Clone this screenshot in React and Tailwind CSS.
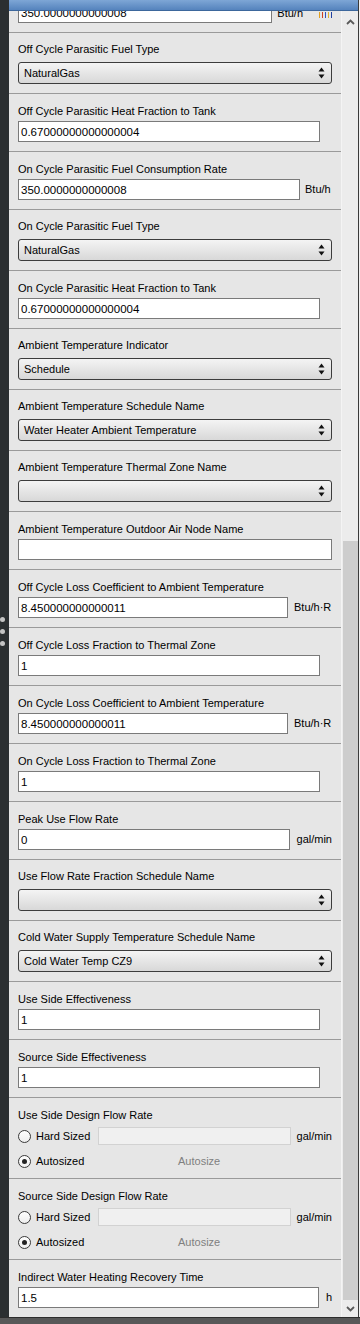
import React from "react";

const sections = [
  { kind: "select", label: "Off Cycle Parasitic Fuel Type", value: "NaturalGas" },
  { kind: "input", label: "Off Cycle Parasitic Heat Fraction to Tank", value: "0.67000000000000004", w: "w-[302px]" },
  { kind: "input", label: "On Cycle Parasitic Fuel Consumption Rate", value: "350.0000000000008", w: "w-[282px]", unit: "Btu/h", gap: "ml-[5px]" },
  { kind: "select", label: "On Cycle Parasitic Fuel Type", value: "NaturalGas" },
  { kind: "input", label: "On Cycle Parasitic Heat Fraction to Tank", value: "0.67000000000000004", w: "w-[302px]" },
  { kind: "select", label: "Ambient Temperature Indicator", value: "Schedule" },
  { kind: "select", label: "Ambient Temperature Schedule Name", value: "Water Heater Ambient Temperature" },
  { kind: "select", label: "Ambient Temperature Thermal Zone Name", value: "" },
  { kind: "input", label: "Ambient Temperature Outdoor Air Node Name", value: "", w: "w-[314px]" },
  { kind: "input", label: "Off Cycle Loss Coefficient to Ambient Temperature", value: "8.450000000000011", w: "w-[270px]", unit: "Btu/h·R", gap: "ml-[6px]" },
  { kind: "input", label: "Off Cycle Loss Fraction to Thermal Zone", value: "1", w: "w-[302px]" },
  { kind: "input", label: "On Cycle Loss Coefficient to Ambient Temperature", value: "8.450000000000011", w: "w-[270px]", unit: "Btu/h·R", gap: "ml-[6px]" },
  { kind: "input", label: "On Cycle Loss Fraction to Thermal Zone", value: "1", w: "w-[302px]" },
  { kind: "input", label: "Peak Use Flow Rate", value: "0", w: "w-[273px]", unit: "gal/min", gap: "ml-[7px]" },
  { kind: "select", label: "Use Flow Rate Fraction Schedule Name", value: "" },
  { kind: "select", label: "Cold Water Supply Temperature Schedule Name", value: "Cold Water Temp CZ9" },
  { kind: "input", label: "Use Side Effectiveness", value: "1", w: "w-[302px]" },
  { kind: "input", label: "Source Side Effectiveness", value: "1", w: "w-[302px]" },
  { kind: "radio", label: "Use Side Design Flow Rate" },
  { kind: "radio", label: "Source Side Design Flow Rate" },
];

function Label({ children }) {
  return <div className="h-[15px] leading-[15px] whitespace-nowrap text-black">{children}</div>;
}

function TextBox({ value, w }) {
  return (
    <input
      readOnly
      value={value}
      className={`${w} h-[21px] border border-[#7a7a7a] bg-white px-[2px] text-[11.5px] leading-[19px] text-black outline-none`}
    />
  );
}

function Arrows() {
  return (
    <svg width="7" height="12" viewBox="0 0 7 12">
      <polygon points="3.5,0.5 6.5,4.5 0.5,4.5" fill="#111" />
      <polygon points="0.5,7.5 6.5,7.5 3.5,11.5" fill="#111" />
    </svg>
  );
}

function Combo({ value }) {
  return (
    <div className="flex h-[22px] w-[314px] items-center justify-between rounded-[3px] border border-[#3c3c3c] bg-linear-to-b from-[#f4f4f4] to-[#d8d8d8] pl-[5px] pr-[6px]">
      <span className="whitespace-nowrap">{value}</span>
      <Arrows />
    </div>
  );
}

function Radio({ checked }) {
  return (
    <span className="flex h-[13px] w-[13px] items-center justify-center rounded-full border border-[#3a3a3a] bg-linear-to-b from-[#ffffff] to-[#eeeeee]">
      {checked && <span className="h-[5px] w-[5px] rounded-full bg-[#222]" />}
    </span>
  );
}

function Section({ s }) {
  if (s.kind === "select") {
    return (
      <div className="flex h-[61px] flex-col border-b border-[#9a9a9a] px-[9px] pt-[9px]">
        <Label>{s.label}</Label>
        <div className="mt-[5px]">
          <Combo value={s.value} />
        </div>
      </div>
    );
  }
  if (s.kind === "radio") {
    return (
      <div className="flex h-[81px] flex-col border-b border-[#9a9a9a] px-[9px] pt-[10px]">
        <Label>{s.label}</Label>
        <div className="mt-[2px] flex h-[22px] items-center">
          <Radio />
          <span className="ml-[5px] w-[62px]">Hard Sized</span>
          <div className="h-[18px] w-[194px] border border-[#d2d2d2] bg-[#f0f0f0]" />
          <span className="ml-[6px]">gal/min</span>
        </div>
        <div className="mt-[3px] flex h-[22px] items-center">
          <Radio checked />
          <span className="ml-[5px] w-[142px]">Autosized</span>
          <span className="text-[#808080]">Autosize</span>
        </div>
      </div>
    );
  }
  return (
    <div className="flex h-[58px] flex-col border-b border-[#9a9a9a] px-[9px] pt-[10px]">
      <Label>{s.label}</Label>
      <div className="mt-[2px] flex items-center">
        <TextBox value={s.value} w={s.w} />
        {s.unit && <span className={`${s.gap} whitespace-nowrap`}>{s.unit}</span>}
      </div>
    </div>
  );
}

function Chevron({ down }) {
  return (
    <svg width="9" height="6" viewBox="0 0 9 6">
      <polyline
        points={down ? "1,1 4.5,4.5 8,1" : "1,5 4.5,1.5 8,5"}
        fill="none"
        stroke="#5a5a5a"
        strokeWidth="1.8"
      />
    </svg>
  );
}

export default function App() {
  return (
    <div className="flex h-[1324px] w-[360px] flex-col overflow-hidden bg-[#585858] font-['Liberation_Sans',Arial,sans-serif] text-[11px] text-black">
      <div className="flex h-[1317px]">
        {/* dark dock strip */}
        <div className="flex w-[9px] flex-col bg-[#2b2f31]">
          <div className="mt-[617px] flex flex-col gap-[7px]">
            <span className="h-[5px] w-[5px] rounded-full bg-[#c4c4c4]" />
            <span className="h-[5px] w-[5px] rounded-full bg-[#c4c4c4]" />
            <span className="h-[5px] w-[5px] rounded-full bg-[#c4c4c4]" />
          </div>
        </div>

        <div className="flex w-[349px] flex-col">
          <div className="h-[11px] border-b border-[#3d679c] bg-linear-to-b from-[#7ea6d6] to-[#5583bd]" />
          <div className="flex flex-1">
            {/* inspector panel */}
            <div className="flex w-[332px] flex-col overflow-hidden bg-[#e6e6e6]">
              <div className="-mt-[9px] flex h-[31px] shrink-0 items-start border-b border-[#9a9a9a] px-[9px]">
                <TextBox value="350.0000000000008" w="w-[282px]" />
                <span className="ml-[5px] mt-[3px]">Btu/h</span>
                <div className="ml-[16px] mt-[10px] flex h-[6px] gap-[2px]">
                  <span className="w-px bg-[#e0a020]" />
                  <span className="w-px bg-[#d04020]" />
                  <span className="w-px bg-[#3050c0]" />
                  <span className="w-px bg-[#e0b030]" />
                  <span className="w-px bg-[#2040a0]" />
                </div>
              </div>
              {sections.map((s, i) => (
                <Section key={i} s={s} />
              ))}
              <div className="flex flex-col px-[9px] pt-[10px]">
                <Label>Indirect Water Heating Recovery Time</Label>
                <div className="mt-[2px] flex items-center">
                  <TextBox value="1.5" w="w-[301px]" />
                  <span className="ml-[7px]">h</span>
                </div>
              </div>
            </div>

            {/* scrollbar */}
            <div className="flex w-[17px] flex-col border-l border-[#f4f4f4] bg-[#ececec]">
              <div className="flex h-[20px] items-end justify-center pb-[6px]">
                <Chevron />
              </div>
              <div className="h-[510px]" />
              <div className="mx-auto h-[759px] w-[15px] bg-[#cdcdcd]" />
              <div className="flex flex-1 items-center justify-center">
                <Chevron down />
              </div>
            </div>
          </div>
        </div>

        <div className="w-px bg-[#3a3a3a]" />
        <div className="w-px bg-[#efefef]" />
      </div>
      <div className="h-px bg-[#2d2d2d]" />
    </div>
  );
}
